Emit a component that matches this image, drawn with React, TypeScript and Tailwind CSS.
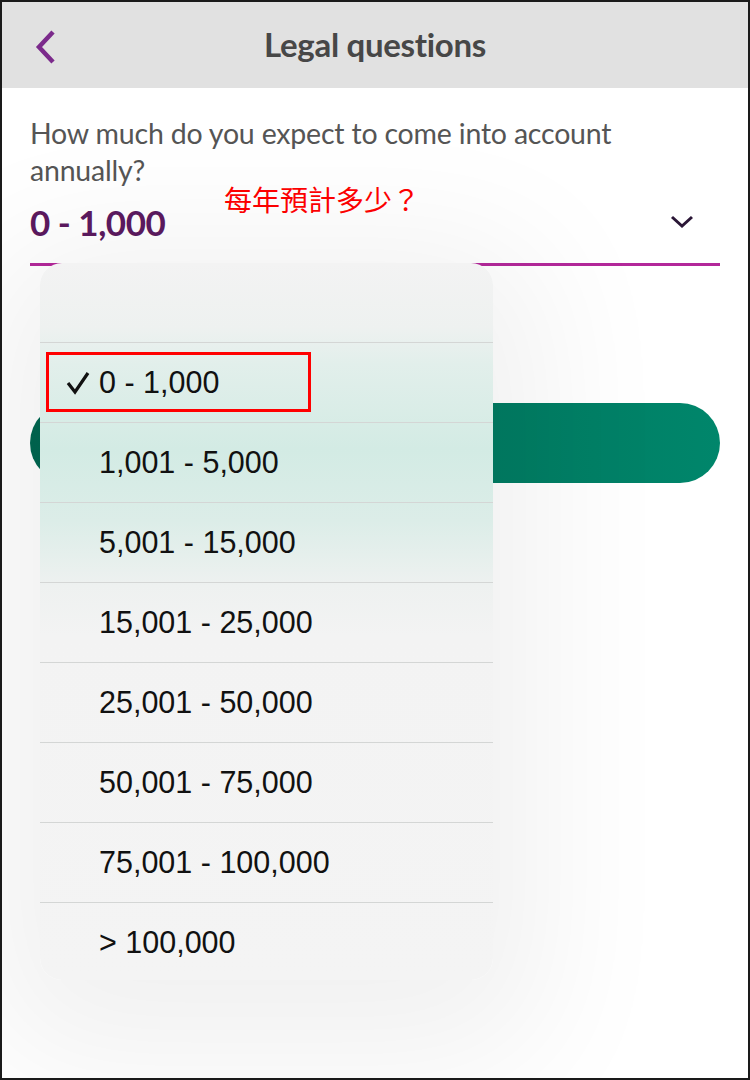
import React from "react";

const options = [
  "0 - 1,000",
  "1,001 - 5,000",
  "5,001 - 15,000",
  "15,001 - 25,000",
  "25,001 - 50,000",
  "50,001 - 75,000",
  "75,001 - 100,000",
  "> 100,000",
];

export default function App() {
  return (
    <div className="w-[750px] h-[1080px] relative overflow-hidden border-2 border-[#1a1a1a] bg-white font-['Lato','Noto_Sans',sans-serif]">
      {/* Header */}
      <div className="h-[86px] bg-[#e1e1e1] flex items-center justify-center relative">
        <svg className="absolute left-[32px] top-[27px]" width="24" height="36" viewBox="0 0 24 36">
          <path d="M19 3 L5 18 L19 33" fill="none" stroke="#7b2a8b" strokeWidth="4.5" strokeLinecap="butt" strokeLinejoin="miter" />
        </svg>
        <div className="text-[33px] font-bold text-[#474747] tracking-[-0.3px]">Legal questions</div>
      </div>

      {/* Body */}
      <div className="px-[28px] pt-[27px]">
        <div className="text-[28.5px] leading-[37px] text-[#555555] max-w-[630px] tracking-[-0.2px]">
          How much do you expect to come into account annually?
        </div>
        <div className="flex items-center justify-between h-[44px] mt-[11px]">
          <div className="text-[35px] font-bold text-[#5c1a5f] tracking-[-0.5px]">0 - 1,000</div>
          <svg className="mr-[26px]" width="24" height="14" viewBox="0 0 24 14">
            <path d="M2 2 L12 11 L22 2" fill="none" stroke="#2a1636" strokeWidth="3" />
          </svg>
        </div>
        <div className="mt-[19px] h-[3px] bg-[#b3289a]" />
        <div className="mt-[137px] h-[80px] rounded-full bg-gradient-to-r from-[#006650] to-[#00866b]" />
      </div>

      {/* annotation */}
      <div className="absolute left-[222px] top-[182px] text-[28px] leading-[30px] text-[#ff0000] font-['Noto_Sans_CJK_TC',sans-serif]">
        每年預計多少？
      </div>

      {/* Dropdown menu */}
      <div className="absolute left-[38px] top-[261px] w-[453px] h-[717px] rounded-[22px] overflow-hidden shadow-[0_30px_140px_50px_rgba(0,0,0,0.06)] bg-[linear-gradient(180deg,#f3f3f3_0%,#eef1f0_9%,#e2efeb_14%,#d3ebe4_26%,#dcede8_36%,#eef1f0_45%,#f3f3f3_52%,#f4f4f4_100%)] font-['Liberation_Sans',Arial,sans-serif]">
        <div className="h-[79px]" />
        {options.map((o, i) => (
          <div key={o} className="h-[80px] border-t-[1.5px] border-[#d4d6d5] flex items-center text-[30.5px] text-[#111111]">
            <div className="w-[59px] flex justify-end pr-[8px]">
              {i === 0 && (
                <svg width="26" height="24" viewBox="0 0 26 24">
                  <path d="M3 12 L10 21 L23 2" fill="none" stroke="#111" strokeWidth="3.2" strokeLinejoin="miter" />
                </svg>
              )}
            </div>
            <span>{o}</span>
          </div>
        ))}
        {/* red highlight box */}
        <div className="absolute left-[6px] top-[89px] w-[265px] h-[60px] border-[3px] border-[#ff0000]" />
      </div>
    </div>
  );
}
